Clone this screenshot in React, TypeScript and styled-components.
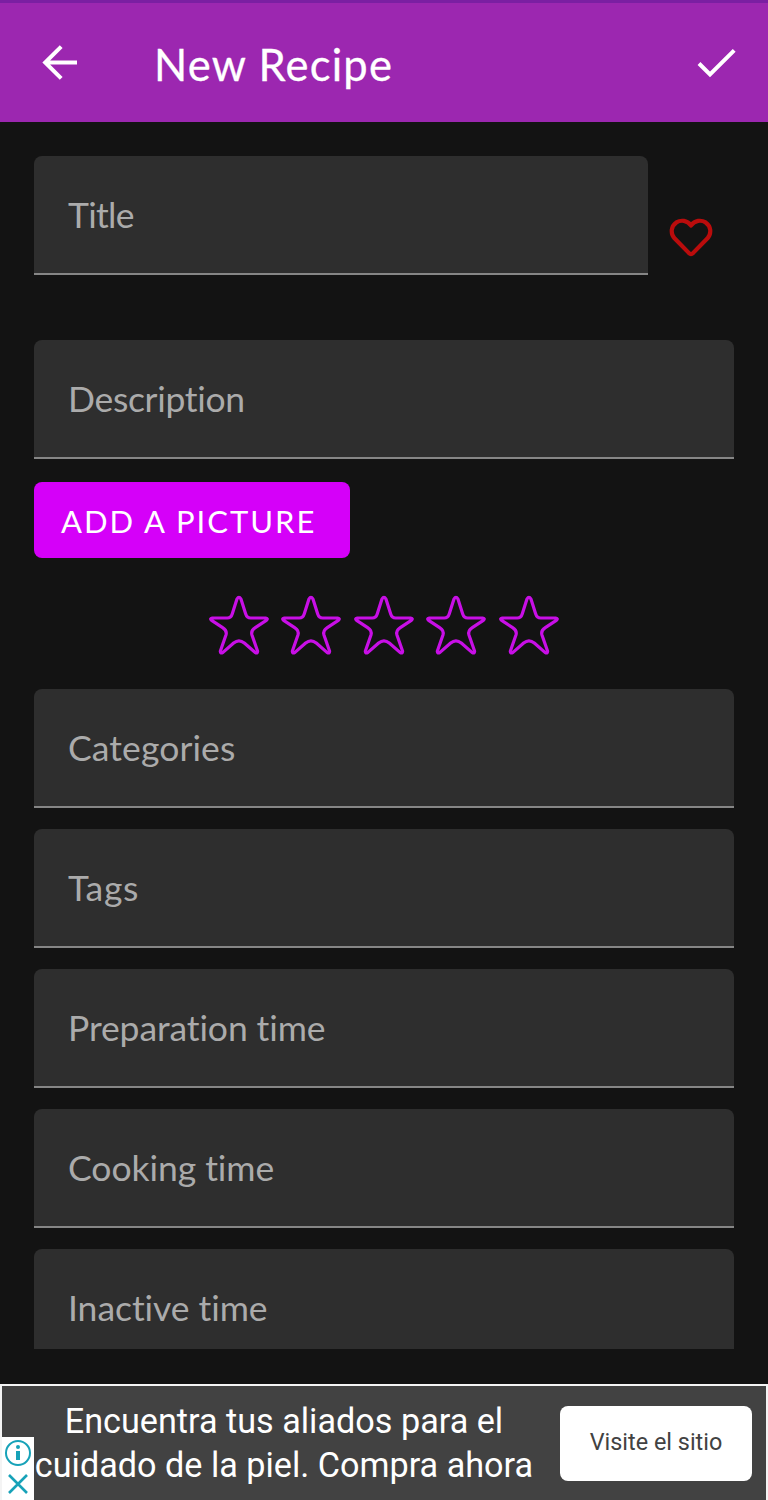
import React from 'react';
import styled, { createGlobalStyle } from 'styled-components';

const GlobalStyle = createGlobalStyle`
  * { box-sizing: border-box; }
  body { margin: 0; background: #131313; }
`;

const Screen = styled.div`
  display: flex;
  flex-direction: column;
  width: 768px;
  height: 1500px;
  overflow: hidden;
  background: #131313;
  font-family: Lato, 'Liberation Sans', sans-serif;
`;

const AppBar = styled.header`
  display: flex;
  align-items: center;
  flex: none;
  height: 122px;
  padding: 0 30px 0 39px;
  border-top: 3px solid #7b1fa2;
  background: #9c27b0;
  color: #fff;
`;

const IconButton = styled.button`
  display: flex;
  flex: none;
  padding: 0;
  border: 0;
  background: none;
  color: inherit;
`;

const Heading = styled.h1`
  flex: 1;
  margin: 3px 0 0 73px;
  font-size: 43.5px;
  line-height: 54px;
  font-weight: 400;
  letter-spacing: 1.2px;
  -webkit-text-stroke: 0.3px currentColor;
`;

const Form = styled.main`
  display: flex;
  flex-direction: column;
  flex: none;
  height: 1227px;
  padding: 34px 34px 0;
  overflow: hidden;
`;

const TitleRow = styled.div`
  display: flex;
  align-items: flex-start;
  flex: none;
  gap: 20px;
  height: 184px;
`;

const Field = styled.label<{ $width?: number }>`
  display: flex;
  align-items: center;
  flex: none;
  width: ${({ $width }) => ($width ? `${$width}px` : '700px')};
  height: 119px;
  padding: 0 34px;
  border-bottom: 2px solid #868686;
  border-radius: 8px 8px 0 0;
  background: #2e2e2e;
  color: #ababab;
`;

const FieldLabel = styled.span<{ $spacing: number }>`
  font-size: 35.5px;
  line-height: 44px;
  letter-spacing: ${({ $spacing }) => $spacing}px;
  white-space: nowrap;
`;

const FavoriteButton = styled(IconButton)`
  margin-top: 60px;
`;

const PictureButton = styled.button`
  flex: none;
  align-self: flex-start;
  width: 316px;
  height: 76px;
  margin-top: 23px;
  padding: 2px 0 0 27px;
  border: 0;
  border-radius: 8px;
  background: #d500f9;
  color: #fff;
  font: 400 31px/40px Lato, 'Liberation Sans', sans-serif;
  letter-spacing: 2px;
  text-align: left;
  white-space: nowrap;
`;

const Rating = styled.div`
  display: flex;
  justify-content: center;
  flex: none;
  height: 80px;
  margin: 27px 0 24px;
`;

const FieldList = styled.div`
  display: flex;
  flex-direction: column;
  gap: 21px;
`;

const AdBanner = styled.aside`
  display: flex;
  align-items: flex-start;
  flex: none;
  height: 116px;
  margin-top: 35px;
  border: 2px solid #f4f4f4;
  border-bottom: 0;
  background: #424242;
  color: #fff;
  font-family: Roboto, sans-serif;
`;

const AdChoices = styled.div`
  display: flex;
  flex-direction: column;
  align-items: center;
  gap: 6px;
  width: 32px;
  height: 64px;
  margin-top: 51px;
  padding-top: 2px;
  background: #fff;
`;

const AdText = styled.p`
  width: 500px;
  margin: 13px 0 0;
  font-size: 34.2px;
  line-height: 44px;
  text-align: center;
  white-space: nowrap;
`;

const AdAction = styled.button`
  width: 192px;
  height: 75px;
  margin: 20px 0 0 26px;
  padding: 0 0 3px;
  border: 0;
  border-radius: 8px;
  background: #fff;
  color: #424242;
  font: 400 23.4px/30px Roboto, sans-serif;
  white-space: nowrap;
`;

const STAR =
  'M110 41 Q116 31 122 41 L136 85 Q140 98 151 98 L196 98 Q205 100 198 105 L165 127 Q151 136 155 149 L172 198 Q172 206 164 201 L132 173 Q116 160 100 173 L68 201 Q60 206 60 198 L77 149 Q81 136 67 127 L34 105 Q27 100 36 98 L81 98 Q92 98 96 85 Z';

const Star = () => (
  <svg width="72.6" height="80" viewBox="8.1 -1 217.8 240" fill="none">
    <path d={STAR} stroke="#c80fe6" strokeWidth="9.6" strokeLinejoin="round" />
  </svg>
);

const FIELDS = [
  { label: 'Categories', spacing: 0.1 },
  { label: 'Tags', spacing: 0.7 },
  { label: 'Preparation time', spacing: -0.1 },
  { label: 'Cooking time', spacing: -0.05 },
  { label: 'Inactive time', spacing: -0.05 },
];

export default function App() {
  return (
    <Screen>
      <GlobalStyle />
      <AppBar>
        <IconButton aria-label="Back">
          <svg width="42" height="42" viewBox="0 0 42 42" fill="none" stroke="currentColor" strokeWidth="4">
            <path d="M38 20.5H6M22.2 4.7L6.2 20.5L22.2 36.3" />
          </svg>
        </IconButton>
        <Heading>New Recipe</Heading>
        <IconButton aria-label="Save">
          <svg width="42" height="42" viewBox="0 0 42 42" fill="none" stroke="currentColor" strokeWidth="4">
            <path d="M3 21.5L14 32.5L38.2 8.3" />
          </svg>
        </IconButton>
      </AppBar>
      <Form>
        <TitleRow>
          <Field $width={614}>
            <FieldLabel $spacing={-0.7}>Title</FieldLabel>
          </Field>
          <FavoriteButton aria-label="Favorite">
            <svg width="46" height="44" viewBox="0 0 46 44" fill="none" stroke="#ba0c0c" strokeWidth="4.2" strokeLinejoin="round">
              <path d="M23 9.5C19 4.2 13 3.6 8.4 6.4C3 10 2.2 17.4 6.5 22.3L20.8 36.9Q23 39 25.2 36.9L39.5 22.3C43.8 17.4 43 10 37.6 6.4C33 3.6 27 4.2 23 9.5Z" />
            </svg>
          </FavoriteButton>
        </TitleRow>
        <Field>
          <FieldLabel $spacing={-0.3}>Description</FieldLabel>
        </Field>
        <PictureButton>ADD A PICTURE</PictureButton>
        <Rating>
          {[1, 2, 3, 4, 5].map((n) => (
            <Star key={n} />
          ))}
        </Rating>
        <FieldList>
          {FIELDS.map(({ label, spacing }) => (
            <Field key={label}>
              <FieldLabel $spacing={spacing}>{label}</FieldLabel>
            </Field>
          ))}
        </FieldList>
      </Form>
      <AdBanner>
        <AdChoices>
          <svg width="28" height="28" viewBox="0 0 28 28" fill="none" stroke="#17a2b8">
            <circle cx="14" cy="14" r="12" strokeWidth="2" />
            <path d="M14 12V21" strokeWidth="4" />
            <circle cx="14" cy="8" r="2" fill="#17a2b8" stroke="none" />
          </svg>
          <svg width="22" height="22" viewBox="0 0 22 22" fill="none" stroke="#17a2b8" strokeWidth="2.6">
            <path d="M2 2L20 20M20 2L2 20" />
          </svg>
        </AdChoices>
        <AdText>
          Encuentra tus aliados para el
          <br />
          cuidado de la piel. Compra ahora
        </AdText>
        <AdAction>Visite el sitio</AdAction>
      </AdBanner>
    </Screen>
  );
}
